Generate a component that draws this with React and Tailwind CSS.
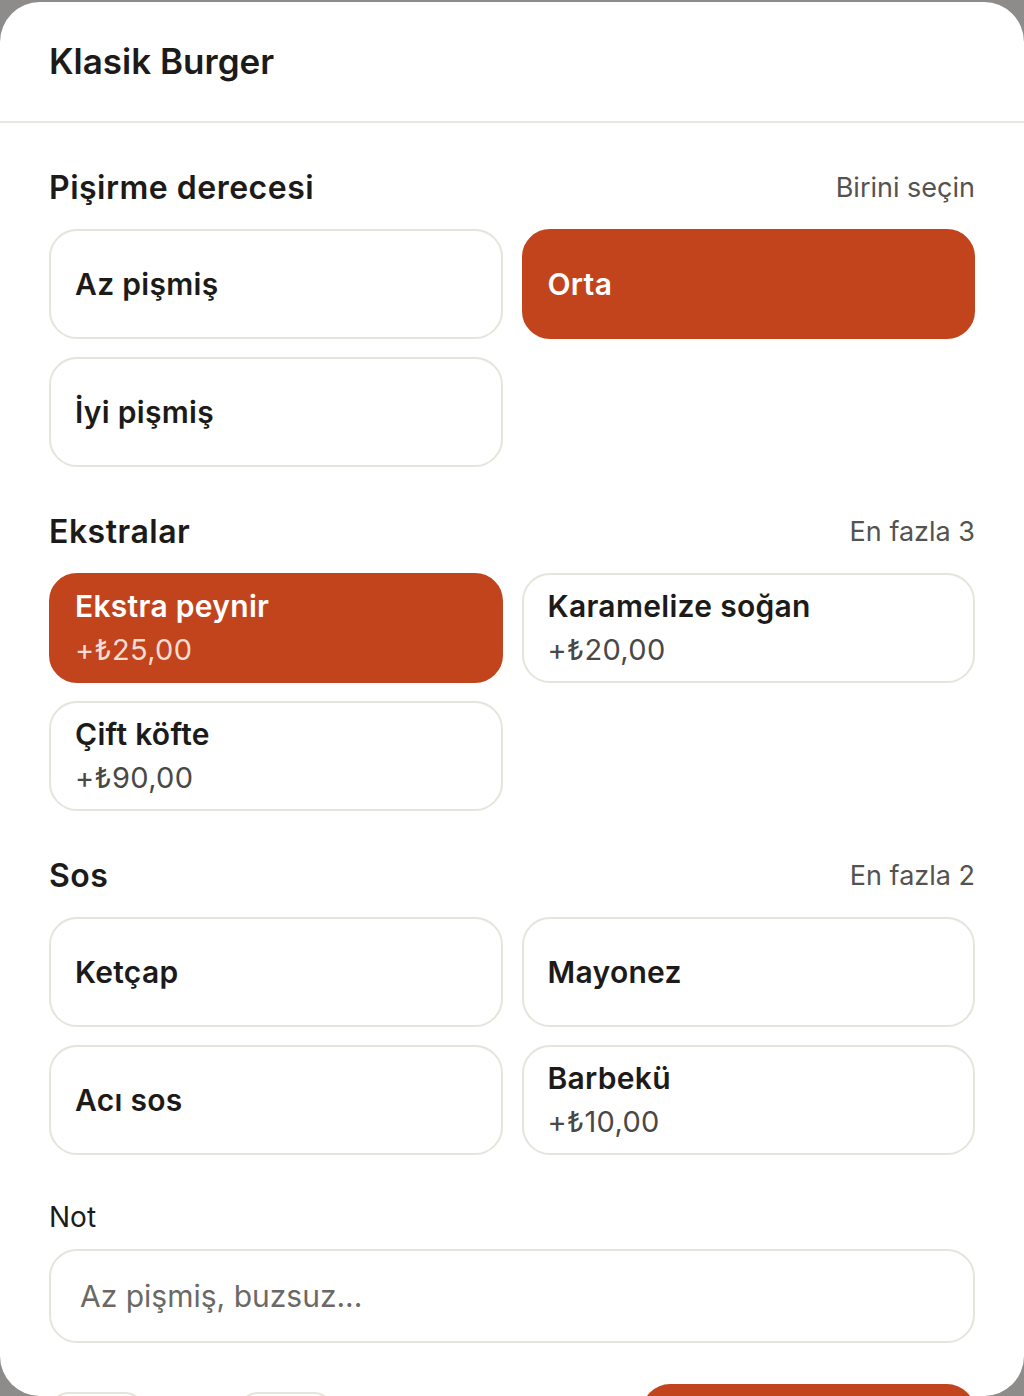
import { useState } from 'react'

const font = { fontFamily: 'Inter, "Noto Sans", sans-serif' }

const sections = [
  {
    title: 'Pişirme derecesi',
    hint: 'Birini seçin',
    options: [
      { name: 'Az pişmiş' },
      { name: 'Orta', selected: true },
      { name: 'İyi pişmiş' },
    ],
  },
  {
    title: 'Ekstralar',
    hint: 'En fazla 3',
    options: [
      { name: 'Ekstra peynir', price: '+₺25,00', selected: true },
      { name: 'Karamelize soğan', price: '+₺20,00' },
      { name: 'Çift köfte', price: '+₺90,00' },
    ],
  },
  {
    title: 'Sos',
    hint: 'En fazla 2',
    options: [
      { name: 'Ketçap' },
      { name: 'Mayonez' },
      { name: 'Acı sos' },
      { name: 'Barbekü', price: '+₺10,00' },
    ],
  },
]

function Option({ name, price, selected }) {
  return (
    <button
      className={`h-[110px] rounded-[28px] px-[24px] text-left flex flex-col justify-center border-2 ${
        selected ? 'bg-[#c2441d] border-[#c2441d] text-white' : 'bg-white border-[#e7e4dc] text-[#1c1b1a]'
      }`}
    >
      <span className="text-[30px] font-semibold leading-[44px] tracking-[0.3px]">{name}</span>
      {price && (
        <span className={`text-[29px] leading-[44px] tracking-[0.3px] ${selected ? 'text-[#f6dcd2]' : 'text-[#4a4845]'}`}>{price}</span>
      )}
    </button>
  )
}

function Section({ title, hint, options }) {
  return (
    <section>
      <div className="flex items-center justify-between h-[40px] mb-[21px]">
        <h2 className="text-[32px] font-semibold text-[#1c1b1a] tracking-[0.5px]">{title}</h2>
        <span className="text-[27px] text-[#55534f]">{hint}</span>
      </div>
      <div className="grid grid-cols-2 gap-x-[19px] gap-y-[18px]">
        {options.map((o) => (
          <Option key={o.name} {...o} />
        ))}
      </div>
    </section>
  )
}

export default function App() {
  const [note, setNote] = useState('')
  const [qty, setQty] = useState(1)
  return (
    <div className="h-[1396px] bg-[#8d8c8a] pt-[2px] overflow-hidden" style={font}>
      <div className="h-[1394px] bg-white rounded-[40px] overflow-hidden flex flex-col">
        <header className="h-[121px] shrink-0 flex items-center px-[49px] border-b-2 border-[#e8e6df]">
          <h1 className="text-[35px] font-semibold text-[#1c1b1a]">Klasik Burger</h1>
        </header>

        <main className="px-[49px] pt-[45px] flex flex-col gap-[45px]">
          {sections.map((s) => (
            <Section key={s.title} {...s} />
          ))}

          <div className="-mt-[3px]">
            <label className="block h-[40px] leading-[40px] text-[28px] text-[#1c1b1a] mb-[12px]">Not</label>
            <input
              value={note}
              onChange={(e) => setNote(e.target.value)}
              placeholder="Az pişmiş, buzsuz..."
              className="w-full h-[94px] rounded-[28px] border-2 border-[#e7e4dc] px-[29px] text-[30px] text-[#1c1b1a] placeholder:text-[#6b6965] outline-none"
            />
          </div>

          {/* footer, mostly below the fold */}
          <div className="-mt-[4px] flex items-start justify-between">
            <div className="flex items-start pt-[8px]">
              <button
                onClick={() => setQty(Math.max(1, qty - 1))}
                className="w-[96px] h-[96px] rounded-[20px] border-2 border-[#e7e4dc] flex items-center justify-center"
              >
                <svg width="28" height="28" viewBox="0 0 24 24" fill="none" stroke="#1c1b1a" strokeWidth="2.5" strokeLinecap="round">
                  <path d="M5 12h14" />
                </svg>
              </button>
              <div className="w-[93px] h-[130px]" />
              <button
                onClick={() => setQty(qty + 1)}
                className="w-[96px] h-[96px] rounded-[20px] border-2 border-[#e7e4dc] flex items-center justify-center"
              >
                <svg width="28" height="28" viewBox="0 0 24 24" fill="none" stroke="#1c1b1a" strokeWidth="2.5" strokeLinecap="round">
                  <path d="M12 5v14M5 12h14" />
                </svg>
              </button>
            </div>
            <button className="w-[333px] h-[130px] rounded-[28px] bg-[#c2441d]" />
          </div>
        </main>
      </div>
    </div>
  )
}
